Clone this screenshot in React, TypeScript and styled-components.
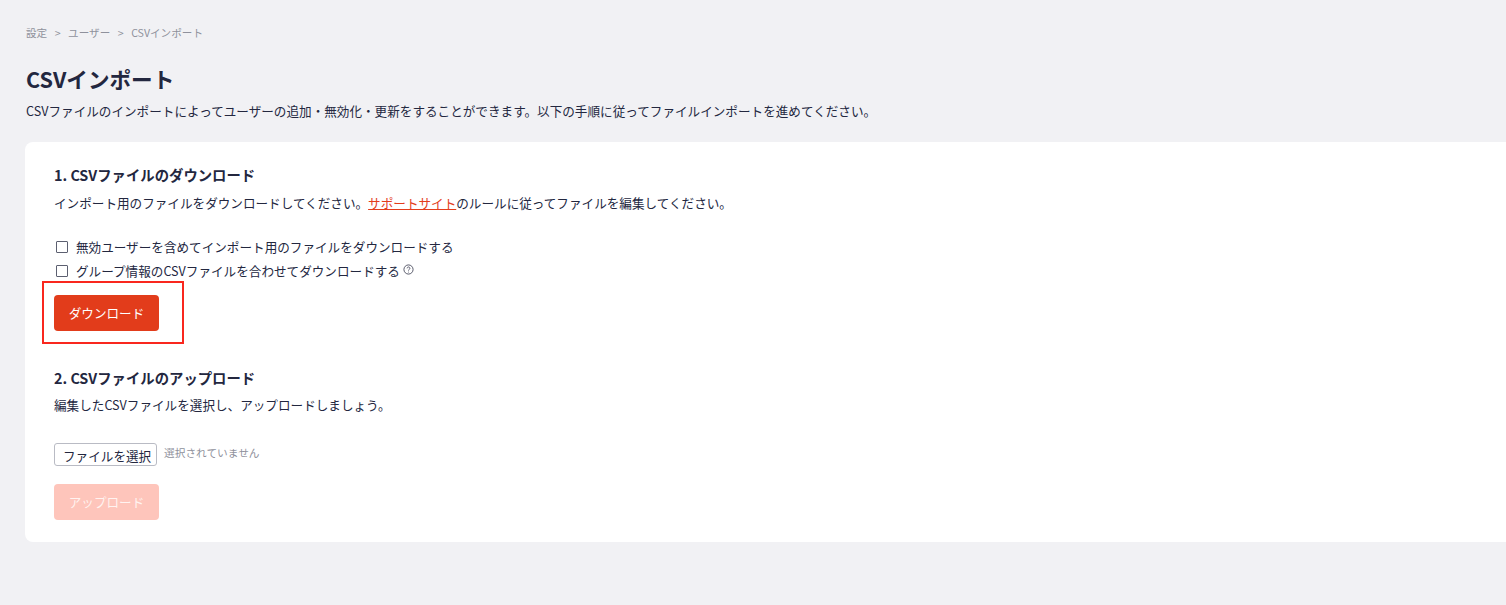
import styled, { createGlobalStyle } from "styled-components";

const GlobalStyle = createGlobalStyle`
  html, body {
    margin: 0;
    padding: 0;
    background: #f1f1f4;
    overflow: hidden;
  }
  body {
    font-family: "Noto Sans CJK JP", "Noto Sans", sans-serif;
    color: #23273f;
  }
`;

const Page = styled.main`
  width: 1506px;
  height: 605px;
  box-sizing: border-box;
  padding: 25px 0 0 25px;
  overflow: hidden;
`;

const Breadcrumb = styled.nav`
  display: flex;
  align-items: center;
  gap: 7.5px;
  height: 16px;
  padding-left: 1px;
  font-size: 10.6px;
  line-height: 16px;
  color: #8f919c;
`;

const Title = styled.h1`
  margin: 22px 0 0;
  font-size: 21.6px;
  line-height: 32px;
  font-weight: 700;
  padding-left: 1px;
`;

const Lead = styled.p`
  margin: 6px 0 0;
  padding-left: 1px;
  font-size: 12.6px;
  line-height: 20px;
`;

const Card = styled.section`
  width: 1520px;
  height: 400px;
  box-sizing: border-box;
  margin-top: 21px;
  padding: 21px 29px;
  background: #fff;
  border-radius: 8px;
`;

const Heading = styled.h2`
  margin: 0;
  font-size: 14.36px;
  line-height: 24px;
  font-weight: 700;
`;

const Text = styled.p`
  margin: 6px 0 0;
  font-size: 12.6px;
  line-height: 20px;
`;

const SupportLink = styled.a`
  color: #e33d1c;
  text-decoration: underline;
`;

const Options = styled.div`
  display: flex;
  flex-direction: column;
  gap: 4px;
  margin-top: 24px;
`;

const OptionRow = styled.label`
  display: flex;
  align-items: center;
  gap: 8px;
  height: 20px;
  font-size: 12.6px;
  line-height: 20px;
`;

const Box = styled.span`
  width: 10px;
  height: 10px;
  margin-left: 2px;
  border: 1px solid #5c5f70;
  border-radius: 1px;
`;

const HelpIcon = styled.svg`
  width: 11px;
  height: 11px;
  margin: -3px 0 0 -5px;
`;

const ButtonFrame = styled.div<{ $top: number }>`
  position: relative;
  width: 105px;
  margin-top: ${(p) => p.$top}px;
`;

const Highlight = styled.div`
  position: absolute;
  left: -12px;
  top: -14px;
  width: 138px;
  height: 59px;
  border: 2px solid #f9271e;
  pointer-events: none;
`;

const ActionButton = styled.button<{ $disabled?: boolean }>`
  display: block;
  width: 105px;
  height: 36px;
  padding: 0 0 2px;
  border: 0;
  border-radius: 4px;
  background: ${(p) => (p.$disabled ? "#fec5bb" : "#e23c1b")};
  color: ${(p) => (p.$disabled ? "#fff3f0" : "#fff")};
  font-family: inherit;
  font-size: 12.6px;
`;

const UploadHeading = styled(Heading)`
  margin-top: 35px;
`;

const UploadText = styled(Text)`
  margin-top: 5px;
`;

const FileRow = styled.div`
  display: flex;
  align-items: flex-start;
  gap: 7px;
  margin-top: 28px;
`;

const FileButton = styled.span`
  display: block;
  box-sizing: border-box;
  width: 103px;
  height: 23px;
  padding: 1px 0 0 8px;
  border: 1px solid #b9bbc4;
  border-radius: 3px;
  font-size: 12.6px;
  line-height: 21px;
  white-space: nowrap;
`;

const FileState = styled.span`
  font-size: 10.7px;
  line-height: 19px;
  color: #8f919c;
`;

export default function App() {
  return (
    <Page>
      <GlobalStyle />
      <Breadcrumb>
        <span>設定</span>
        <span>&gt;</span>
        <span>ユーザー</span>
        <span>&gt;</span>
        <span>CSVインポート</span>
      </Breadcrumb>
      <Title>CSVインポート</Title>
      <Lead>
        CSVファイルのインポートによってユーザーの追加・無効化・更新をすることができます。以下の手順に従ってファイルインポートを進めてください。
      </Lead>
      <Card>
        <Heading>1. CSVファイルのダウンロード</Heading>
        <Text>
          インポート用のファイルをダウンロードしてください。
          <SupportLink href="#">サポートサイト</SupportLink>
          のルールに従ってファイルを編集してください。
        </Text>
        <Options>
          <OptionRow>
            <Box />
            無効ユーザーを含めてインポート用のファイルをダウンロードする
          </OptionRow>
          <OptionRow>
            <Box />
            グループ情報のCSVファイルを合わせてダウンロードする
            <HelpIcon viewBox="0 0 12 12" fill="none" stroke="#4a4d5e" strokeWidth="1">
              <circle cx="6" cy="6" r="5" />
              <path d="M4.5 4.7a1.5 1.5 0 1 1 2.3 1.3c-.5.3-.8.6-.8 1.1" />
              <path d="M6 8.4v.8" />
            </HelpIcon>
          </OptionRow>
        </Options>
        <ButtonFrame $top={14}>
          <Highlight />
          <ActionButton>ダウンロード</ActionButton>
        </ButtonFrame>
        <UploadHeading>2. CSVファイルのアップロード</UploadHeading>
        <UploadText>編集したCSVファイルを選択し、アップロードしましょう。</UploadText>
        <FileRow>
          <FileButton>ファイルを選択</FileButton>
          <FileState>選択されていません</FileState>
        </FileRow>
        <ButtonFrame $top={18}>
          <ActionButton $disabled>アップロード</ActionButton>
        </ButtonFrame>
      </Card>
    </Page>
  );
}
